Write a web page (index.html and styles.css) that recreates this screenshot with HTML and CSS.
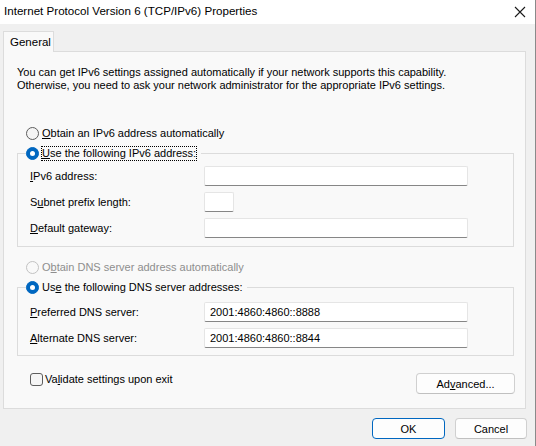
FILE: index.html
```html
<!DOCTYPE html>
<html>
<head>
<meta charset="utf-8">
<link rel="stylesheet" href="styles.css">
</head>
<body>
<div class="window">
  <div class="titlebar">
    <span class="title">Internet Protocol Version 6 (TCP/IPv6) Properties</span>
    <span class="close"><svg width="12" height="12" viewBox="0 0 12 12"><path d="M1 1 L11 11 M11 1 L1 11" stroke="#1a1a1a" stroke-width="1.1" fill="none"/></svg></span>
  </div>
  <div class="client">
    <div class="tabs"><div class="tab">General</div></div>
    <div class="panel">
      <p class="intro">You can get IPv6 settings assigned automatically if your network supports this capability.<br>Otherwise, you need to ask your network administrator for the appropriate IPv6 settings.</p>

      <div class="radio radio-top"><span class="rb"></span><span class="rtext"><u>O</u>btain an IPv6 address automatically</span></div>

      <fieldset class="group">
        <legend class="legend"><span class="radio"><span class="rb on"></span><span class="rtext focus"><u>U</u>se the following IPv6 address:</span></span></legend>
        <div class="field"><span class="lbl"><u>I</u>Pv6 address:</span><span class="input wide"></span></div>
        <div class="field"><span class="lbl">S<u>u</u>bnet prefix length:</span><span class="input short"></span></div>
        <div class="field"><span class="lbl"><u>D</u>efault gateway:</span><span class="input wide"></span></div>
      </fieldset>

      <div class="radio radio-dns disabled"><span class="rb"></span><span class="rtext">O<u>b</u>tain DNS server address automatically</span></div>

      <fieldset class="group group-dns">
        <legend class="legend"><span class="radio"><span class="rb on"></span><span class="rtext">Us<u>e</u> the following DNS server addresses:</span></span></legend>
        <div class="field"><span class="lbl"><u>P</u>referred DNS server:</span><span class="input wide">2001:4860:4860::8888</span></div>
        <div class="field"><span class="lbl"><u>A</u>lternate DNS server:</span><span class="input wide">2001:4860:4860::8844</span></div>
      </fieldset>

      <div class="footer-row">
        <div class="check"><span class="cb"></span><span class="ctext">Va<u>l</u>idate settings upon exit</span></div>
        <button class="btn adv">Ad<u>v</u>anced...</button>
      </div>
    </div>
    <div class="buttons">
      <button class="btn ok">OK</button>
      <button class="btn cancel">Cancel</button>
    </div>
  </div>
</div>
</body>
</html>
```

FILE: styles.css
```css
* { box-sizing: border-box; }
html, body { margin: 0; padding: 0; }
body {
  width: 536px;
  height: 446px;
  overflow: hidden;
  font-family: "Liberation Sans", Arial, sans-serif;
  font-size: 11px;
  color: #000;
  background: #f0f0f0;
}
u { text-decoration: underline; text-underline-offset: 1px; }

.window {
  width: 536px;
  height: 446px;
  border-right: 1px solid #8a8a8a;
  display: flex;
  flex-direction: column;
}

.titlebar {
  height: 24px;
  background: #fff;
  display: flex;
  align-items: center;
  justify-content: space-between;
  padding: 0 9px 3px 4px;
  flex: none;
}
.title { font-size: 11.6px; color: #000; }
.close { display: flex; width: 12px; height: 12px; margin-top: 2px; }

.client {
  flex: 1;
  background: #f0f0f0;
  padding: 7px 9px 0 3px;
}

.tabs { display: flex; height: 20px; }
.tab {
  position: relative;
  z-index: 1;
  width: 51px;
  height: 21px;
  background: #f9f9f9;
  border: 1px solid #dcdcdc;
  border-bottom: none;
  padding: 3px 0 0 6px;
  line-height: 14px;
  font-size: 11.5px;
}

.panel {
  height: 358px;
  background: #f9f9f9;
  border: 1px solid #dcdcdc;
  padding: 0 11px 0 13px;
}

.intro {
  margin: 14px 0 0 0;
  line-height: 13px;
}

.radio {
  display: flex;
  align-items: center;
  height: 15px;
  line-height: 15px;
}
.rb {
  width: 13px;
  height: 13px;
  border-radius: 50%;
  border: 1px solid #5d5d5d;
  background: #f5f5f5;
  flex: none;
  margin-right: 3px;
  position: relative;
}
.rb.on {
  border-color: #0067c0;
  background: #0067c0;
}
.rb.on::after {
  content: "";
  position: absolute;
  left: 3px;
  top: 3px;
  width: 5px;
  height: 5px;
  border-radius: 50%;
  background: #fff;
}
.disabled .rb { border-color: #c2c2c2; background: #f9f9f9; }
.disabled .rtext { color: #8e8e8e; }

.radio-top { margin: 34px 0 0 9px; }

.focus {
  outline: 1px dotted #000;
  outline-offset: -1px;
  padding: 0 1px;
  margin-left: -1px;
}

.group {
  margin: 5px 0 0 0;
  padding: 5px 0 8px 12px;
  border: 1px solid #dcdcdc;
  min-width: 0;
}
.legend {
  padding: 0 4px 0 0;
  margin-left: -4px;
}

.field {
  display: flex;
  align-items: center;
  height: 20px;
}
.field + .field { margin-top: 6px; }
.lbl { width: 174px; flex: none; }

.input {
  height: 20px;
  background: #fff;
  border: 1px solid #e5e5e5;
  border-bottom-color: #868686;
  border-radius: 2px;
  padding: 0 5px;
  line-height: 18px;
}
.wide { width: 264px; }
.short { width: 30px; }

.radio-dns { margin: 13px 0 0 9px; }
.group-dns { margin-top: 5px; padding-top: 7px; padding-bottom: 7px; }

.footer-row {
  display: flex;
  justify-content: space-between;
  align-items: flex-start;
  margin-top: 16px;
  padding-left: 13px;
}
.check {
  display: flex;
  align-items: center;
  height: 15px;
  line-height: 15px;
}
.cb {
  width: 13px;
  height: 13px;
  border: 1px solid #5d5d5d;
  border-radius: 3px;
  background: #f5f5f5;
  margin-right: 2px;
  flex: none;
}

.btn {
  font-family: "Liberation Sans", Arial, sans-serif;
  font-size: 11px;
  color: #000;
  background: #fdfdfd;
  border: 1px solid #d0d0d0;
  border-bottom-color: #c0c0c0;
  border-radius: 4px;
  height: 21px;
  padding: 0;
  line-height: 18px;
  flex: none;
}
.adv { width: 99px; margin-top: 1px; margin-right: -1px; }

.buttons {
  display: flex;
  justify-content: flex-end;
  gap: 10px;
  margin-top: 9px;
  margin-right: -1px;
}
.ok { width: 73px; border: 1px solid #0067c0; }
.cancel { width: 72px; }
```
